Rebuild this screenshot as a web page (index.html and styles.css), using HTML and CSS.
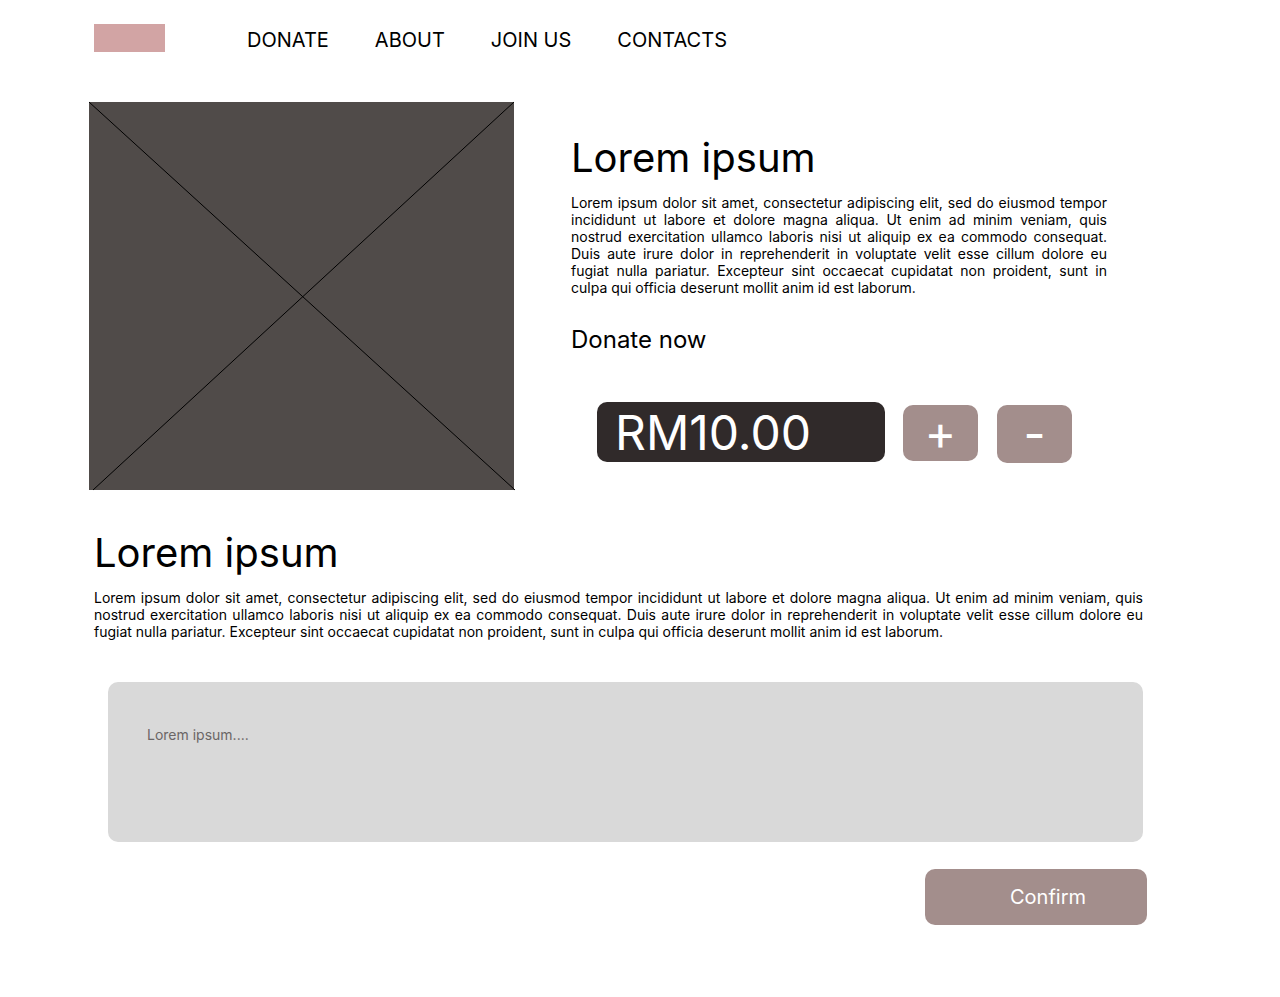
FILE: index.html
```html
<!DOCTYPE html>
<html lang="en">
<head>
<meta charset="utf-8">
<meta name="viewport" content="width=device-width, initial-scale=1">
<title>Donate</title>
<link rel="stylesheet" href="styles.css">
</head>
<body>
<header class="header">
  <a class="logo" href="#" aria-label="Home"></a>
  <nav class="nav">
    <a href="#">DONATE</a>
    <a href="#">ABOUT</a>
    <a href="#">JOIN US</a>
    <a href="#">CONTACTS</a>
  </nav>
</header>
<main class="main">
  <section class="hero">
    <div class="picture">
      <svg class="cross" width="425" height="388" viewBox="0 0 425 388" preserveAspectRatio="none" aria-hidden="true">
        <path d="M0 0L426 388M425 0L4 388" stroke="#000" fill="none"/>
      </svg>
    </div>
    <div class="intro">
      <h1 class="title">Lorem ipsum</h1>
      <p class="copy">Lorem ipsum dolor sit amet, consectetur adipiscing elit, sed do eiusmod tempor incididunt ut labore et dolore magna aliqua. Ut enim ad minim veniam, quis nostrud exercitation ullamco laboris nisi ut aliquip ex ea commodo consequat. Duis aute irure dolor in reprehenderit in voluptate velit esse cillum dolore eu fugiat nulla pariatur. Excepteur sint occaecat cupidatat non proident, sunt in culpa qui officia deserunt mollit anim id est laborum.</p>
      <h2 class="subtitle"><label for="amount">Donate now</label></h2>
      <div class="stepper">
        <input class="amount" id="amount" type="text" value="RM10.00">
        <div class="steps">
          <button class="step" type="button" aria-label="Increase">+</button>
          <button class="step step-minus" type="button" aria-label="Decrease">-</button>
        </div>
      </div>
    </div>
  </section>
  <section class="details">
    <h2 class="title"><label for="message">Lorem ipsum</label></h2>
    <p class="copy">Lorem ipsum dolor sit amet, consectetur adipiscing elit, sed do eiusmod tempor incididunt ut labore et dolore magna aliqua. Ut enim ad minim veniam, quis nostrud exercitation ullamco laboris nisi ut aliquip ex ea commodo consequat. Duis aute irure dolor in reprehenderit in voluptate velit esse cillum dolore eu fugiat nulla pariatur. Excepteur sint occaecat cupidatat non proident, sunt in culpa qui officia deserunt mollit anim id est laborum.</p>
    <textarea class="message" id="message" placeholder="Lorem ipsum...."></textarea>
  </section>
  <button class="confirm" type="submit">Confirm</button>
</main>
</body>
</html>
```

FILE: styles.css
```css
* { box-sizing: border-box; }
body {
  margin: 0;
  background: #fff;
  color: #000;
  font-family: Inter, "Liberation Sans", sans-serif;
  font-size: 14px;
  line-height: 17px;
}
h1, h2, p { margin: 0; font-weight: 400; }
button, input, textarea { font: inherit; border: 0; }
.header {
  display: flex;
  align-items: flex-start;
  gap: 82px;
  padding: 24px 94px 0;
}
.logo { width: 71px; height: 28px; background: #d2a4a4; }
.nav {
  display: flex;
  gap: 46px;
  padding-top: 4px;
  font-size: 20px;
  line-height: 24px;
}
.nav a { color: inherit; text-decoration: none; }
.main {
  display: flex;
  flex-direction: column;
  padding: 50px 133px 72px 89px;
}
.hero {
  display: flex;
  gap: 57px;
  padding-right: 40px;
}
.picture { flex: 425 1 0; min-width: 0; height: 388px; background: #504b49; }
.cross { display: block; width: 100%; height: 100%; overflow: visible; }
.intro { flex: 536 1 0; min-width: 0; padding-top: 32px; }
.title { font-size: 40px; line-height: 48px; }
.copy { margin-top: 12px; text-align: justify; }
.subtitle { margin-top: 29px; font-size: 24px; line-height: 29px; }
.stepper {
  display: flex;
  align-items: flex-start;
  gap: 18px;
  margin-top: 48px;
  padding: 0 35px 0 26px;
}
.amount {
  flex: 1;
  min-width: 0;
  height: 60px;
  padding: 0 18px;
  border-radius: 10px;
  background: #302a2a;
  color: #fff;
  font-size: 48px;
}
.steps {
  display: flex;
  align-items: flex-start;
  gap: 19px;
  padding-top: 3px;
}
.step {
  width: 75px;
  height: 56px;
  padding: 0;
  border-radius: 10px;
  background: #a38e8c;
  color: #fff;
  font-size: 48px;
  line-height: 56px;
}
.step-minus { height: 58px; }
.details { padding: 39px 4px 0 5px; }
.message {
  display: block;
  width: calc(100% - 14px);
  height: 160px;
  margin: 42px 0 0 14px;
  padding: 44px 39px;
  border-radius: 10px;
  background: #d9d9d9;
  resize: none;
}
.message::placeholder { color: #6b6666; opacity: 1; }
.confirm {
  align-self: flex-end;
  width: 222px;
  height: 56px;
  margin-top: 27px;
  padding: 0 0 0 24px;
  border-radius: 10px;
  background: #a38e8c;
  color: #fff;
  font-size: 20px;
  line-height: 24px;
}
```
